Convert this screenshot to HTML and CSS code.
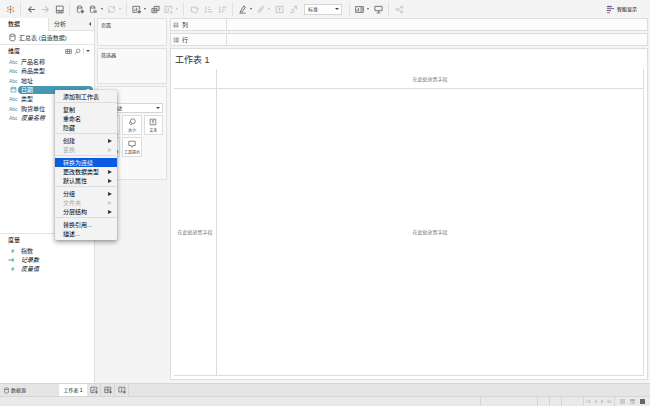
FILE: index.html
```html
<!DOCTYPE html>
<html lang="zh-CN">
<head>
<meta charset="utf-8">
<title>工作表 1</title>
<link rel="stylesheet" href="styles.css">
</head>
<body>
<svg class="sprite" aria-hidden="true">
  <symbol id="db" viewBox="0 0 10 10"><ellipse cx="5" cy="2.5" rx="2.8" ry="1.3"/><path d="M2.2 2.5v5c0 1.7 5.6 1.7 5.6 0v-5"/></symbol>
  <symbol id="dbplus" viewBox="0 0 10 10"><ellipse cx="4" cy="2.3" rx="2.5" ry="1.2"/><path d="M1.5 2.3v5c0 .8 1 1.2 2.5 1.2M6.5 2.3v2.5"/><path d="M7 5.2v4M5 7.2h4" stroke-width="1.5"/></symbol>
  <symbol id="dbpause" viewBox="0 0 10 10"><ellipse cx="4" cy="2.3" rx="2.5" ry="1.2"/><path d="M1.5 2.3v5c0 .8 1 1.2 2.5 1.2M6.5 2.3v2.5"/><path d="M5.7 5.8v3.2M7.7 5.8v3.2" stroke-width="1.3"/></symbol>
  <symbol id="chartplus" viewBox="0 0 10 10"><path d="M5.5 8.2H1V1.5h7.5V5M3 6.8V5M4.8 6.8V3M6.5 5V4"/><path d="M8 5.5v4M6 7.5h4" stroke-width="1.4"/></symbol>
</svg>

<header class="toolbar">
  <div class="group"><button class="tool" aria-label="开始"><svg viewBox="0 0 10 10"><path d="M5 3v4M3 5h4" stroke="#e27b36"/><path d="M5 .8v1.8M4.1 1.7h1.8M5 7.4v1.8M4.1 8.3h1.8" stroke="#6b8299"/><path d="M2 2.2v2M1 3.2h2M8 5.8v2M7 6.8h2" stroke="#d38a70"/><path d="M8 2.2v2M7 3.2h2M2 5.8v2M1 6.8h2" stroke="#e8a35f"/></svg></button></div>
  <div class="group">
    <button class="tool" aria-label="后退"><svg viewBox="0 0 10 10"><path d="M9 5H2M5 1.8 1.8 5 5 8.2" stroke-width="1.2"/></svg></button>
    <button class="tool" aria-label="前进" disabled><svg viewBox="0 0 10 10"><path d="M1 5h7M5 1.8 8.2 5 5 8.2" stroke-width="1.2"/></svg></button>
    <button class="tool" aria-label="保存"><svg viewBox="0 0 10 10"><path d="M1.5 1.2H9v7.6H1.5zM1.5 6H9M4 8.8V7.5h3.5v1.3"/></svg></button>
  </div>
  <div class="group">
    <button class="tool" aria-label="新建数据源"><svg><use href="#dbplus"/></svg></button>
    <button class="tool split" aria-label="暂停更新"><svg><use href="#dbpause"/></svg><i class="caret"></i></button>
    <button class="tool split" aria-label="刷新" disabled><svg viewBox="0 0 10 10"><path d="M1.3 5a3.5 3.5 0 0 1 6.5-1.7M8.7 5a3.5 3.5 0 0 1-6.5 1.700M8.2 1.3v2.3H6M1.8 8.7V6.4H4"/></svg><i class="caret"></i></button>
  </div>
  <div class="group">
    <button class="tool split" aria-label="新建工作表"><svg><use href="#chartplus"/></svg><i class="caret"></i></button>
    <button class="tool" aria-label="复制工作表"><svg viewBox="0 0 10 10"><path d="M3.5 1.5H9V6H3.5zM1 4h5.5v4.5H1zM2.7 7.5v-2M4.5 7.5V6M6.5 4V2.8"/></svg></button>
    <button class="tool split" aria-label="清除工作表" disabled><svg viewBox="0 0 10 10"><path d="M5.5 8.2H1V1.5h7.5V5M3 6.8V5M4.8 6.8V3M6.5 6.5l3 3M9.5 6.5l-3 3"/></svg><i class="caret"></i></button>
  </div>
  <div class="group">
    <button class="tool" aria-label="交换行和列" disabled><svg viewBox="0 0 10 10"><path d="M1.5 7.5v-5h5M3.500 8.500H7c1.300-1 1.500-2 1.500-4M1.500 7.500h2M5.500 1 7 2.500 5.500 4M7 4.500 8.500 3 10 4.500"/></svg></button>
    <button class="tool" aria-label="升序排序" disabled><svg viewBox="0 0 10 10"><path d="M2 1.5v7M.8 7.2 2 8.5l1.2-1.3M4.500 7.500h5M4.500 5H8M4.500 2.500h2"/></svg></button>
    <button class="tool" aria-label="降序排序" disabled><svg viewBox="0 0 10 10"><path d="M2 1.5v7M.8 7.2 2 8.5l1.2-1.3M4.500 7.500h2M4.500 5H8M4.500 2.500h5"/></svg></button>
  </div>
  <div class="group">
    <button class="tool split" aria-label="突出显示"><svg viewBox="0 0 10 10"><path d="M3 6.5 6.5 1l1.800 1.200-3.500 5.100L2.700 8zM1.500 9h7"/></svg><i class="caret"></i></button>
    <button class="tool split" aria-label="组成员" disabled><svg viewBox="0 0 10 10"><path d="M2 7.5l4.500-6c1-1 2.500.2 1.800 1.300L4.500 8c-1 1-2.300 0-1.600-1L6 3"/></svg><i class="caret"></i></button>
    <button class="tool" aria-label="显示标记标签" disabled><svg viewBox="0 0 10 10"><path d="M1.200 1.500h7.600v7H1.200zM3.500 3.500h3M5 3.500V7"/></svg></button>
    <button class="tool" aria-label="固定轴" disabled><svg viewBox="0 0 10 10"><path d="M5 1.500h3.500V5M8 2 5.500 4.500M3 4l3 3M2.500 7.500 5 5M1.500 8.500h4"/></svg></button>
    <select class="select fit" aria-label="适合"><option>标准</option></select>
  </div>
  <div class="group">
    <button class="tool split" aria-label="显示卡片"><svg viewBox="0 0 10 10"><path d="M.7 1.800h8.600v6.400H.7zM6.800 2v6M2.300 7V5M4 7V3.500M7.800 3.500h1M7.800 5.500h1"/></svg><i class="caret"></i></button>
    <button class="tool" aria-label="演示模式"><svg viewBox="0 0 10 10"><path d="M1 1.500h8v4.800H1zM5 6.300v2M3 8.800h4"/></svg></button>
  </div>
  <div class="group">
    <button class="tool" aria-label="共享" disabled><svg viewBox="0 0 10 10"><circle cx="2.3" cy="5" r="1.2"/><circle cx="7.5" cy="2.3" r="1.2"/><circle cx="7.5" cy="7.7" r="1.2"/><path d="m3.300 4.500 3.200-1.700M3.300 5.500l3.200 1.700"/></svg></button>
  </div>
  <button class="showme"><svg viewBox="0 0 10 10"><path d="M1 1.700h5.500" stroke="#536684" stroke-width="1.5"/><path d="M1 4h8" stroke="#a26c94" stroke-width="1.3"/><path d="M1 6.200h4.500" stroke="#536684" stroke-width="1.2"/><path d="M1 8.500h3.500" stroke="#d9829c" stroke-width="1.5"/></svg>智能显示</button>
</header>

<main class="workspace">
  <aside class="data">
    <nav class="side-tabs"><button class="side-tab active">数据</button><button class="side-tab">分析<i class="collapse"></i></button></nav>
    <div class="source"><svg class="icon"><use href="#db"/></svg>汇总表 (自造数据)</div>
    <section class="dimensions">
      <h2 class="heading">维度
        <span class="heading-tools">
          <button aria-label="查看数据"><svg viewBox="0 0 10 10"><path d="M1 2h8v6H1zM1 5h8M3.700 2v6M6.300 2v6"/></svg></button>
          <button aria-label="查找"><svg viewBox="0 0 10 10"><circle cx="6" cy="4" r="2.5"/><path d="M4 6 1.500 8.500"/></svg></button>
          <button class="more" aria-label="选项"><i class="caret"></i></button>
        </span>
      </h2>
      <ul class="fields seven">
        <li class="field"><span class="abc">Abc</span><span class="name">产品名称</span></li>
        <li class="field"><span class="abc">Abc</span><span class="name">商品类型</span></li>
        <li class="field"><span class="abc">Abc</span><span class="name">地址</span></li>
        <li class="field selected"><span class="abc"><svg class="date" viewBox="0 0 10 10"><path d="M1.500 2.500h7v6h-7zM1.500 4h7M3.300 1v1.500M6.700 1v1.500"/></svg></span><span class="name">日期<i class="caret"></i></span>
          <div class="menu" role="menu">
            <button class="item">添加到工作表</button>
            <hr>
            <button class="item">复制</button>
            <button class="item">重命名</button>
            <button class="item">隐藏</button>
            <hr>
            <button class="item sub">创建</button>
            <button class="item sub" disabled>变换</button>
            <hr>
            <button class="item current">转换为连续</button>
            <button class="item sub">更改数据类型</button>
            <button class="item sub">默认属性</button>
            <hr>
            <button class="item sub">分组</button>
            <button class="item sub" disabled>文件夹</button>
            <button class="item sub">分层结构</button>
            <hr>
            <button class="item">替换引用...</button>
            <button class="item">描述...</button>
          </div>
        </li>
        <li class="field"><span class="abc">Abc</span><span class="name">类型</span></li>
        <li class="field"><span class="abc">Abc</span><span class="name">购货单位</span></li>
        <li class="field"><span class="abc">Abc</span><span class="name generated">度量名称</span></li>
      </ul>
    </section>
    <section class="measures">
      <h2 class="heading">度量</h2>
      <ul class="fields three">
        <li class="field"><span class="num">#</span><span class="name">指数</span></li>
        <li class="field"><span class="num">=#</span><span class="name generated">记录数</span></li>
        <li class="field"><span class="num">#</span><span class="name generated">度量值</span></li>
      </ul>
    </section>
  </aside>

  <div class="cards">
    <section class="card pages"><h3>页面</h3></section>
    <section class="card filters"><h3>筛选器</h3></section>
    <section class="card marks">
      <h3>标记</h3>
      <select class="select mark-type" aria-label="标记类型"><option>自动</option></select>
      <div class="mark-grid">
        <button><svg viewBox="0 0 10 10"><circle cx="3" cy="3" r="1.5"/><circle cx="7" cy="3" r="1.5"/><circle cx="3" cy="7" r="1.5"/><circle cx="7" cy="7" r="1.5"/></svg>颜色</button>
        <button><svg viewBox="0 0 10 10"><circle cx="6" cy="4" r="3"/><path d="M3.200 4.500a2 2 0 1 0 2.500 2.600"/></svg>大小</button>
        <button><svg viewBox="0 0 10 10"><path d="M1.500 1.500h7v7h-7zM3.500 3.500h3M5 3.500V7"/></svg>文本</button>
        <button><svg viewBox="0 0 10 10"><circle cx="3" cy="5" r="1.5"/><circle cx="7" cy="3" r="1.5"/><circle cx="7" cy="7" r="1.5"/></svg>详细信息</button>
        <button><svg viewBox="0 0 10 10"><path d="M1 1.500h8v5.500H6L5 9 4 7H1z"/></svg>工具提示</button>
      </div>
    </section>
  </div>

  <div class="view">
    <div class="shelf"><span class="shelf-label"><svg viewBox="0 0 10 10"><path d="M2 1v2M5 1v2M8 1v2M2 4v5M5 4v5M8 4v5" stroke-width="1.5"/></svg>列</span></div>
    <div class="shelf"><span class="shelf-label"><svg viewBox="0 0 10 10"><path d="M1 2h2M1 5h2M1 8h2M4 2h5.500M4 5h5.500M4 8h5.500" stroke-width="1.5"/></svg>行</span></div>
    <section class="sheet">
      <h1>工作表 1</h1>
      <div class="canvas">
        <div class="drop corner"></div>
        <div class="drop top">在此处放置字段</div>
        <div class="drop left">在此处放置字段</div>
        <div class="drop">在此处放置字段</div>
      </div>
    </section>
  </div>
</main>

<nav class="sheet-tabs">
  <button class="source-tab"><svg><use href="#db"/></svg>数据源</button>
  <button class="sheet-tab">工作表 1</button>
  <button class="new-tab" aria-label="新建工作表"><svg><use href="#chartplus"/></svg></button>
  <button class="new-tab" aria-label="新建仪表板"><svg viewBox="0 0 10 10"><path d="M5.500 8.200H1V1.500h7.500V5M1 4.800h7.500M4.800 1.500v6.700"/><path d="M8 5.500v4M6 7.500h4" stroke-width="1.4"/></svg></button>
  <button class="new-tab" aria-label="新建故事"><svg viewBox="0 0 10 10"><path d="M5.500 8.200 4.800 7.500H1v-6h3l.8.700.8-.7h3V5M4.800 2.200v5.300"/><path d="M8 5.500v4M6 7.500h4" stroke-width="1.4"/></svg></button>
</nav>

<footer class="status">
  <span class="cell wide"></span><span class="cell"></span><span class="cell"></span><span class="cell mid"></span>
  <span class="cell pager">
    <button aria-label="第一个" disabled><svg viewBox="0 0 10 10"><path d="M2 2v6M8 2 4 5l4 3z"/></svg></button>
    <button aria-label="上一个" disabled><svg viewBox="0 0 10 10"><path d="M7 2 3 5l4 3z"/></svg></button>
    <button aria-label="下一个" disabled><svg viewBox="0 0 10 10"><path d="m3 2 4 3-4 3z"/></svg></button>
    <button aria-label="最后一个" disabled><svg viewBox="0 0 10 10"><path d="M8 2v6M2 2l4 3-4 3z"/></svg></button>
  </span>
  <span class="cell modes">
    <button aria-label="工作表排序程序"><svg viewBox="0 0 6 6"><path fill="#c2c2c2" stroke="none" d="M0 0h6v6H0z"/><path stroke="#ddd" stroke-width=".5" d="M0 2h6M0 4h6M2 0v6M4 0v6"/></svg></button>
    <button aria-label="缩略图"><svg viewBox="0 0 6 6"><path fill="#b5b5b5" stroke="none" d="M0 0h6v3H0zM0 4h1v2H0zM2 4h2v2H2zM5 4h1v2H5z"/></svg></button>
    <button aria-label="标签"><svg viewBox="0 0 6 6"><path fill="#666" stroke="none" d="M0 0h6v6H0z"/></svg></button>
  </span>
</footer>
</body>
</html>
```
FILE: styles.css
```css
* { box-sizing: border-box; }

body {
  margin: 0;
  height: 100vh;
  display: flex;
  flex-direction: column;
  overflow: hidden;
  background: #f4f4f4;
  color: #333;
  font: 5px/8px "Liberation Sans", "Noto Sans CJK SC", sans-serif;
}

button, select {
  margin: 0;
  padding: 0;
  border: 0;
  border-radius: 0;
  background: none;
  color: inherit;
  font: inherit;
}

h1, h2, h3, ul { margin: 0; padding: 0; font: inherit; list-style: none; }

svg {
  display: block;
  flex: none;
  width: 9px;
  height: 9px;
  fill: none;
  stroke: #6a6a6a;
}

.sprite { position: absolute; width: 0; height: 0; }

.caret {
  flex: none;
  border: 2px solid transparent;
  border-top-color: #555;
  border-bottom: 0;
}

/* Toolbar */
.toolbar { flex: none; display: flex; align-items: center; height: 18px; }
.group {
  display: flex;
  align-items: center;
  height: 14px;
  padding: 0 3px;
}
.group + .group { border-left: 1px solid #e2e2e2; }
.tool {
  display: flex;
  align-items: center;
  justify-content: center;
  width: 14px;
  height: 12px;
}
.split { width: 18px; justify-content: space-between; padding-left: 2px; }
.tool .caret { border-width: 2px 1px 0; margin-right: 2px; }
.tool:disabled { opacity: .35; }

.select {
  appearance: none;
  border: 1px solid #d5d5d5;
  background: url("data:image/svg+xml,%3Csvg xmlns='http://www.w3.org/2000/svg' viewBox='0 0 4 2'%3E%3Cpath d='M0 0h4L2 2z' fill='%23444'/%3E%3C/svg%3E") right 2px center / 4px 2px no-repeat #fff;
}
.fit { width: 38px; height: 11px; margin: 0 4px; padding: 0 3px; }

.showme {
  display: flex;
  align-items: center;
  gap: 2px;
  margin-left: auto;
  padding-right: 13px;
  color: #000;
}

/* Workspace */
.workspace { flex: 1; min-height: 0; display: flex; }

.data {
  flex: none;
  width: 95px;
  display: flex;
  flex-direction: column;
  background: #fff;
  border-right: 1px solid #ddd;
}
.side-tabs { display: flex; height: 13px; font-size: 6px; }
.side-tab {
  flex: 1;
  padding-left: 5px;
  text-align: left;
  background: #f4f4f4;
  border: solid #e2e2e2;
  border-width: 0 0 1px 1px;
}
.side-tab.active { padding-left: 7px; background: #fff; border-color: #fff; color: #000; }
.collapse {
  float: right;
  margin: 2px 3px;
  border: 2px solid transparent;
  border-right-color: #555;
  border-left: 0;
}
.source {
  display: flex;
  align-items: center;
  gap: 2px;
  height: 14px;
  padding-left: 8px;
  border-bottom: 1px solid #e5e5e5;
  font-size: 6px;
  white-space: nowrap;
}
.heading {
  display: flex;
  align-items: center;
  justify-content: space-between;
  height: 12px;
  padding-left: 8px;
  color: #000;
  font-size: 6px;
}
.heading-tools { display: flex; align-items: center; padding-right: 2px; }
.heading-tools svg { width: 7px; height: 7px; margin-right: 2px; }
.more { display: flex; padding: 2px; border-left: 1px solid #ddd; }
.more .caret { border-width: 2px 2px 0; }

.dimensions { flex: 1; }
.measures { height: 150px; border-top: 1px solid #e5e5e5; }
.fields { display: grid; grid-auto-rows: 1fr; }
.seven { height: 66px; }
.three { height: 28px; }
.field {
  position: relative;
  display: flex;
  align-items: center;
  color: #222;
}
.abc, .num { width: 18px; padding-left: 9px; color: #3f8ba6; }
.num { padding: 0 4px 0 0; color: #3ba07a; text-align: right; font-weight: bold; }
.date { width: 7px; height: 7px; margin-left: 1px; stroke: #4996b2; }
.name {
  flex: 1;
  display: flex;
  align-items: center;
  justify-content: space-between;
  padding-left: 3px;
  font-size: 6px;
}
.generated { font-style: italic; color: #000; }
.selected .name {
  margin-right: 1px;
  padding-right: 3px;
  border-radius: 4px;
  background: #4996b2;
  color: #fff;
}
.selected .caret { border-top-color: #fff; }

/* Context menu */
.menu {
  position: absolute;
  z-index: 2;
  top: 5px;
  left: 55px;
  width: 62px;
  padding: 2px 0;
  border-radius: 1px;
  background: #f3f3f3;
  box-shadow: 0 0 1px #777, 0 2px 5px rgba(0, 0, 0, .4);
}
.item {
  display: flex;
  align-items: center;
  justify-content: space-between;
  width: 100%;
  height: 9px;
  padding: 0 5px 0 8px;
  color: #000;
  font-size: 6px;
  white-space: nowrap;
}
.sub::after {
  content: "";
  border: solid transparent;
  border-width: 2px 0 2px 4px;
  border-left-color: #333;
}
.item:disabled { color: #aaa; }
.item:disabled::after { border-left-color: #ccc; }
.current { background: #0a5be0; color: #fff; }
.menu hr { height: 1px; margin: 1px 0 2px; border: 0; background: #ddd; }

/* Cards */
.cards {
  flex: none;
  display: flex;
  flex-direction: column;
  gap: 2px;
  width: 75px;
  padding: 0 3px 0 2px;
}
.card { padding: 2px 3px; border: 1px solid #e0e0e0; background: #f9f9f9; }
.pages { height: 28px; }
.filters { height: 36px; }
.marks { height: 94px; }
.mark-type { width: 100%; height: 10px; margin: 6px 0 2px; padding-left: 10px; font-size: 5px; }
.mark-grid { display: grid; grid-template-columns: repeat(3, 1fr); gap: 2px; }
.mark-grid button {
  display: flex;
  flex-direction: column;
  align-items: center;
  justify-content: space-between;
  height: 20px;
  padding-top: 2px;
  border: 1px solid #ddd;
  background: #fff;
  font-size: 4px;
  line-height: 7px;
  white-space: nowrap;
}
.mark-grid svg { width: 8px; height: 8px; }

/* View */
.view {
  flex: 1;
  display: flex;
  flex-direction: column;
  gap: 2px;
  padding: 0 2px 3px 0;
}
.shelf { display: flex; height: 13px; border: 1px solid #ddd; background: #fcfcfc; }
.shelf-label {
  display: flex;
  align-items: center;
  gap: 3px;
  width: 56px;
  padding-left: 2px;
  border-right: 1px solid #ddd;
  font-size: 6px;
}
.shelf svg { width: 6px; height: 6px; }
.sheet {
  flex: 1;
  display: flex;
  flex-direction: column;
  padding: 4px 3px 3px;
  border: 1px solid #ddd;
  background: #fff;
}
.sheet h1 { padding-left: 1px; font-size: 9px; line-height: 14px; margin-bottom: 2px; }
.canvas {
  flex: 1;
  display: grid;
  grid-template: 20px 1fr / 43px 1fr;
  border: solid #ddd;
  border-width: 0 1px 1px 0;
}
.drop { display: flex; align-items: center; justify-content: center; color: #777; white-space: nowrap; }
.corner, .top { border-bottom: 1px solid #ddd; }
.corner, .left { border-right: 1px solid #ddd; }

/* Sheet tabs and status bar */
.sheet-tabs {
  flex: none;
  display: flex;
  height: 14px;
  border: solid #d5d5d5;
  border-width: 1px 0;
  background: #e5e5e5;
}
.source-tab { display: flex; align-items: center; gap: 1px; width: 59px; padding-left: 3px; }
.source-tab svg { width: 7px; height: 7px; }
.sheet-tab { width: 28px; background: #fff; color: #111; }
.new-tab { width: 14px; padding: 0 3px; border-right: 1px solid #d5d5d5; }
.new-tab svg { width: 8px; height: 8px; }

.status { flex: none; display: flex; justify-content: flex-end; height: 9px; background: #eaeaea; }
.cell { width: 12px; border-left: 1px solid #d5d5d5; }
.wide { width: 57px; }
.mid { width: 22px; }
.pager { display: flex; align-items: center; justify-content: space-around; width: 31px; padding: 0 1px; }
.pager svg { width: 5px; height: 5px; stroke: #aaa; }
.modes { display: flex; align-items: center; justify-content: space-around; width: 36px; padding: 0 3px; }
.modes svg { width: 5px; height: 5px; }
```
